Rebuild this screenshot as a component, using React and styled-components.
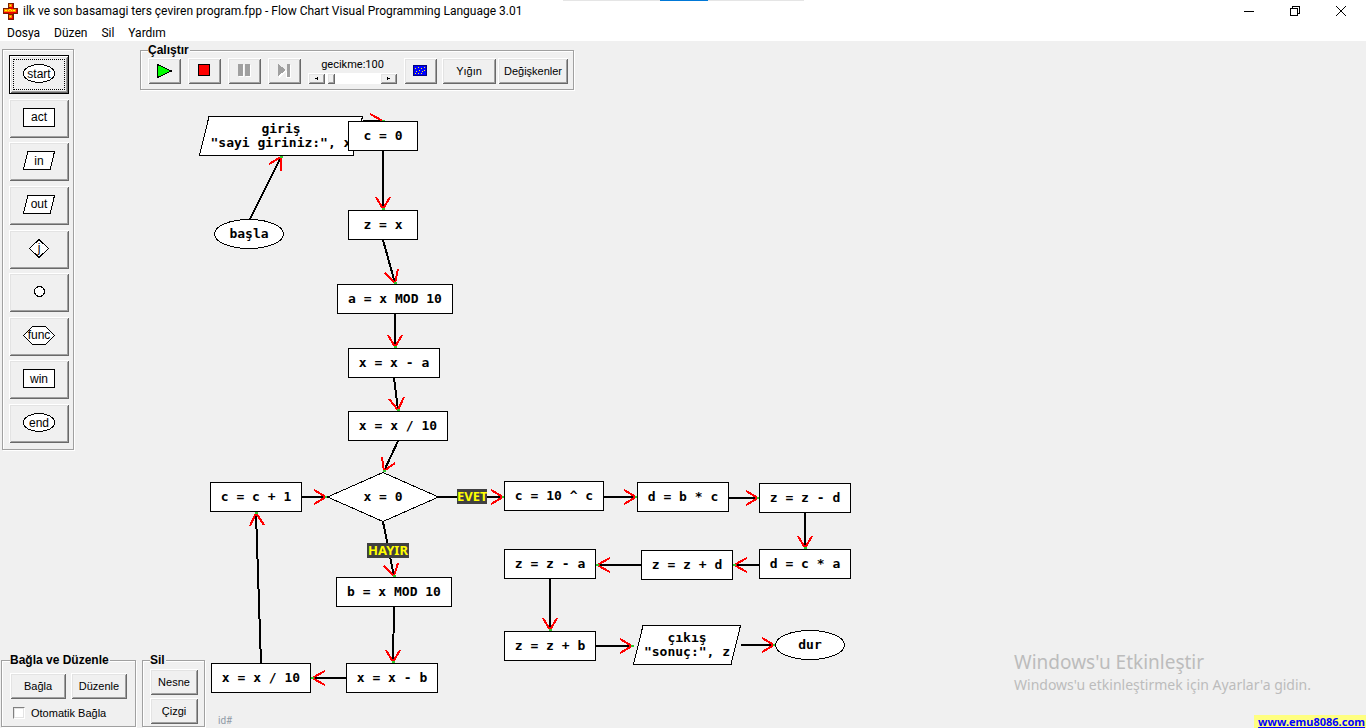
import React from "react";
import styled, { createGlobalStyle, css } from "styled-components";

const sans = '"Liberation Sans", Arial, sans-serif';
const ui = '"Noto Sans", "Open Sans", sans-serif';
const caption = 'Roboto, "Liberation Sans", sans-serif';
const mono = '"DejaVu Sans Mono", "Liberation Mono", monospace';

const GlobalStyle = createGlobalStyle`
  *, *::before, *::after { box-sizing: border-box; }
  body { margin: 0; background: #f0f0f0; color: #000; font-family: ${sans}; font-size: 11px; }
  button { font: inherit; color: inherit; }
`;

const raised = css`
  border: 0;
  background: #f0f0f0;
  box-shadow: inset 1px 1px 0 #fff, inset -1px -1px 0 #696969,
    inset 2px 2px 0 #e3e3e3, inset -2px -2px 0 #a0a0a0;
`;

const etched = css`
  border: 1px solid #a0a0a0;
  box-shadow: 1px 1px 0 #fff, inset 1px 1px 0 #fff;
`;

const Window = styled.div`
  display: flex;
  flex-direction: column;
  min-height: 100vh;
`;

const TitleBar = styled.header`
  position: relative;
  display: flex;
  align-items: center;
  height: 24px;
  padding: 0 2px 2px;
  gap: 5px;
  background: #fff;
`;

const Title = styled.h1`
  flex: 1;
  margin: 0;
  font: 400 12px/20px ${caption};
  white-space: nowrap;
`;

const DockStrip = styled.div`
  position: absolute;
  top: 0;
  left: 50%;
  display: flex;
  justify-content: center;
  width: 241px;
  height: 1px;
  margin-left: -120px;
  background: #e5e5e5;

  &::after {
    content: "";
    width: 48px;
    background: #0078d7;
  }
`;

const WindowControls = styled.div`
  display: flex;
`;

const WindowButton = styled.button`
  display: grid;
  place-items: center;
  width: 46px;
  height: 22px;
  padding: 0;
  border: 0;
  background: none;
`;

const MenuBar = styled.nav`
  display: flex;
  height: 17px;
  background: #fff;
`;

const MenuLink = styled.a`
  padding: 0 7px;
  color: #000;
  font: 12px/19px ${caption};
  text-decoration: none;
`;

const Workspace = styled.main`
  position: relative;
  display: flex;
  flex: 1;
  flex-direction: column;
  justify-content: space-between;
  padding-top: 2px;
`;

const Canvas = styled.div`
  position: absolute;
  inset: 0;
  overflow: hidden;
`;

const EdgeLayer = styled.svg`
  position: absolute;
  width: 100%;
  height: 100%;
`;

const NodeBox = styled.div`
  position: absolute;
  left: ${(p) => p.$x}px;
  top: ${(p) => p.$y}px;
  display: grid;
  place-items: center;
  width: ${(p) => p.$w}px;
  height: ${(p) => p.$h}px;

  > * { grid-area: 1 / 1; }
`;

const NodeText = styled.span`
  font: 700 13px/14px ${mono};
  text-align: center;
  white-space: pre;
`;

const BranchLabel = styled.span`
  position: absolute;
  left: ${(p) => p.$x}px;
  top: ${(p) => p.$y}px;
  width: ${(p) => p.$w}px;
  background: #404040;
  color: #ff0;
  font: 700 13px/15px ${ui};
  text-align: center;
`;

const TopRow = styled.div`
  position: relative;
  display: flex;
  align-items: flex-start;
  gap: 66px;
  padding-left: 2px;
  pointer-events: none;

  > * { pointer-events: auto; }
`;

const Palette = styled.section`
  ${etched}
  display: flex;
  flex-direction: column;
  justify-content: space-between;
  width: 72px;
  height: 401px;
  margin-top: 6px;
  padding: 5px 4px 6px 6px;
`;

const PaletteButton = styled.button`
  ${raised}
  display: grid;
  place-items: center;
  width: 60px;
  height: 39px;
  padding: 0 0 2px;

  ${(p) =>
    p.$active &&
    css`
      border: 1px solid #000;
      outline: 1px dotted #000;
      outline-offset: -5px;
    `}
`;

const Glyph = styled.span`
  display: grid;
  place-items: center;
  font-size: 12px;
  line-height: 16px;

  > * { grid-area: 1 / 1; }
`;

const Group = styled.fieldset`
  ${etched}
  min-width: 0;
  margin: 0;
  padding: ${(p) => p.$pad};
  background: #f0f0f0;
`;

const GroupTitle = styled.legend`
  height: 14px;
  padding: 0 1px 0 0;
  background: #f0f0f0;
  font-weight: 700;
  font-size: 12px;
  line-height: 14px;
`;

const Row = styled.div`
  display: flex;
  align-items: center;
  gap: ${(p) => p.$gap}px;
`;

const Stack = styled.div`
  display: flex;
  flex-direction: column;
  gap: ${(p) => p.$gap}px;
`;

const Button = styled.button`
  ${raised}
  display: grid;
  place-items: center;
  width: ${(p) => p.$w}px;
  height: 26px;
  padding: 0;
`;

const Delay = styled.div`
  display: flex;
  flex-direction: column;
  gap: 2px;
  width: 89px;
`;

const DelayLabel = styled.label`
  font: 11px/12px ${caption};
  text-align: center;
`;

const ScrollArrow = styled.button`
  ${raised}
  display: grid;
  flex: none;
  place-items: center;
  width: 17px;
  height: 11px;
  padding: 0;
`;

const DelayRange = styled.input`
  flex: 1;
  min-width: 0;
  height: 11px;
  margin: 0;
  appearance: none;
  background: #fff;

  &::-webkit-slider-thumb {
    ${raised}
    appearance: none;
    width: 8px;
    height: 11px;
  }
`;

const BottomRow = styled.footer`
  position: relative;
  display: flex;
  align-items: flex-end;
  padding-left: 1px;
  gap: 6px;
  pointer-events: none;

  > * { pointer-events: auto; }
`;

const BottomGroup = styled(Group)`
  height: 74px;
  width: ${(p) => p.$w}px;
  margin-bottom: 1px;
`;

const CheckLabel = styled.label`
  display: flex;
  align-items: center;
  gap: 6px;
  padding-left: 3px;
`;

const CheckBox = styled.input`
  appearance: none;
  width: 12px;
  height: 12px;
  margin: 0;
  border: 1px solid;
  border-color: #808080 #fff #fff #808080;
  background: #fff;
  box-shadow: inset 0 0 0 1px #e3e3e3;
`;

const IdText = styled.span`
  padding: 0 0 0 7px;
  color: #8f9aa6;
  font: 10px/15px ${caption};
`;

const Notice = styled.aside`
  display: flex;
  flex-direction: column;
  margin-left: auto;
`;

const Activation = styled.div`
  padding: 0 55px 19px 0;
  color: #bcbcbc;
  font: 14px/22px ${ui};
`;

const ActivationTitle = styled.p`
  margin: 0;
  font-size: 19px;
  line-height: 23px;
`;

const ActivationText = styled.p`
  margin: 0;
`;

const SiteLink = styled.a`
  align-self: flex-end;
  padding: 0 1px 0 4px;
  background: #ffff80;
  color: #00f;
  font: 700 11px/13px ${ui};
`;

function shapeOf(kind, w, h) {
  const r = w - 0.5;
  const b = h - 0.5;
  if (kind === "ellipse") return <ellipse cx={w / 2} cy={h / 2} rx={w / 2 - 0.5} ry={h / 2 - 0.5} />;
  if (kind === "rect") return <rect x="0.5" y="0.5" width={w - 1} height={h - 1} />;
  const s = h / 4;
  const points = {
    slant: `${s},0.5 ${r},0.5 ${w - s},${b} 0.5,${b}`,
    diamond: `${w / 2},0.5 ${r},${h / 2} ${w / 2},${b} 0.5,${h / 2}`,
    hex: `${s * 2},0.5 ${w - s * 2},0.5 ${r},${h / 2} ${w - s * 2},${b} ${s * 2},${b} 0.5,${h / 2}`,
  }[kind];
  return <polygon points={points} />;
}

function Shape({ kind, w, h }) {
  return (
    <svg width={w} height={h} fill="#fff" stroke="#000" shapeRendering="crispEdges" aria-hidden="true">
      {shapeOf(kind, w, h)}
    </svg>
  );
}

const tools = [
  { name: "start", kind: "ellipse", w: 32, h: 19, text: "start" },
  { name: "act", kind: "rect", w: 32, h: 19, text: "act" },
  { name: "in", kind: "slant", w: 32, h: 19, text: "in" },
  { name: "out", kind: "slant", w: 32, h: 19, text: "out" },
  { name: "join", kind: "diamond", w: 20, h: 19, text: "j" },
  { name: "circle", kind: "ellipse", w: 11, h: 11, text: "" },
  { name: "func", kind: "hex", w: 32, h: 19, text: "func" },
  { name: "win", kind: "rect", w: 32, h: 19, text: "win" },
  { name: "end", kind: "ellipse", w: 32, h: 19, text: "end" },
];

// Node positions are measured from the top left corner of the canvas.
const nodes = [
  { kind: "slant", x: 199, y: 75, w: 164, h: 40, text: 'giriş\n"sayi giriniz:", x' },
  { kind: "ellipse", x: 214, y: 178, w: 70, h: 30, text: "başla" },
  { kind: "rect", x: 348, y: 80, w: 70, h: 30, text: "c = 0" },
  { kind: "rect", x: 348, y: 169, w: 70, h: 30, text: "z = x" },
  { kind: "rect", x: 337, y: 243, w: 116, h: 30, text: "a = x MOD 10" },
  { kind: "rect", x: 348, y: 307, w: 92, h: 30, text: "x = x - a" },
  { kind: "rect", x: 348, y: 370, w: 100, h: 30, text: "x = x / 10" },
  { kind: "diamond", x: 327, y: 431, w: 112, h: 50, text: "x = 0" },
  { kind: "rect", x: 210, y: 441, w: 92, h: 30, text: "c = c + 1" },
  { kind: "rect", x: 336, y: 536, w: 116, h: 30, text: "b = x MOD 10" },
  { kind: "rect", x: 211, y: 622, w: 100, h: 30, text: "x = x / 10" },
  { kind: "rect", x: 346, y: 622, w: 92, h: 30, text: "x = x - b" },
  { kind: "rect", x: 504, y: 440, w: 100, h: 30, text: "c = 10 ^ c" },
  { kind: "rect", x: 637, y: 441, w: 92, h: 30, text: "d = b * c" },
  { kind: "rect", x: 759, y: 442, w: 92, h: 30, text: "z = z - d" },
  { kind: "rect", x: 759, y: 508, w: 92, h: 30, text: "d = c * a" },
  { kind: "rect", x: 641, y: 509, w: 92, h: 30, text: "z = z + d" },
  { kind: "rect", x: 504, y: 508, w: 92, h: 30, text: "z = z - a" },
  { kind: "rect", x: 504, y: 590, w: 92, h: 30, text: "z = z + b" },
  { kind: "slant", x: 633, y: 584, w: 108, h: 40, text: 'çıkış\n"sonuç:", z' },
  { kind: "ellipse", x: 775, y: 589, w: 70, h: 30, text: "dur" },
];

// Each edge: start, tip, and the far ends of the two arrow strokes.
const edges = [
  [[250, 178], [281, 116], [269, 123], [281, 130]],
  [[363, 80], [383, 80], [370, 73], [370, 87]],
  [[383, 110], [383, 168], [376, 156], [390, 156]],
  [[383, 199], [395, 242], [385, 232], [398, 228]],
  [[395, 273], [395, 306], [388, 294], [402, 294]],
  [[394, 337], [398, 369], [389, 358], [404, 356]],
  [[398, 400], [384, 430], [382, 416], [395, 422]],
  [[302, 456], [326, 456], [314, 449], [314, 463]],
  [[439, 456], [503, 456], [491, 449], [491, 463]],
  [[383, 481], [394, 535], [384, 525], [398, 522]],
  [[394, 566], [393, 621], [386, 609], [400, 609]],
  [[346, 637], [312, 637], [325, 630], [325, 644]],
  [[261, 622], [256, 472], [250, 485], [264, 484]],
  [[604, 456], [636, 456], [624, 449], [624, 463]],
  [[729, 457], [758, 457], [746, 450], [746, 464]],
  [[805, 472], [805, 507], [798, 495], [812, 495]],
  [[759, 524], [734, 524], [747, 517], [747, 531]],
  [[641, 524], [597, 524], [610, 517], [610, 531]],
  [[550, 538], [550, 589], [543, 577], [557, 577]],
  [[596, 605], [632, 605], [620, 598], [620, 612]],
  [[741, 604], [774, 604], [762, 597], [762, 611]],
];

function Edge({ points: [from, tip, a, b] }) {
  return (
    <g fill="none" strokeWidth="2">
      <path d={`M${from} L${tip}`} stroke="#000" />
      <path d={`M${a} L${tip} L${b}`} stroke="#f00" />
      <rect x={tip[0] - 1} y={tip[1] - 1} width="3" height="2" fill="#2fc82f" />
    </g>
  );
}

function AppIcon() {
  return (
    <svg width="16" height="18" viewBox="0 0 16 18" shapeRendering="crispEdges" aria-hidden="true">
      <path d="M6 1h5v5h4v5h-4v1H9v1h2v4H6v-4h2v-1H6v-1H1V6h5V5h1V4H6z" fill="#e00" stroke="#7a1f00" />
      <path d="M7 2h3v3H7zM2 7h12v3H2zM7 13h3v3H7z" fill="#f80" />
      <path d="M8 3h1v1H8zM3 8h2v1H3zM6 8h1v1H6zM9 8h1v1H9zM11 8h2v1h-2zM8 14h1v1H8zM7 7h2v1H7z" fill="#ff0" />
    </svg>
  );
}

const icon = { width: 21, height: 18, shapeRendering: "crispEdges", "aria-hidden": true };

const PlayIcon = () => (
  <svg {...icon}><path d="M3.5 2.5v13L17.5 9z" fill="#0f0" stroke="#000" /></svg>
);
const StopIcon = () => (
  <svg {...icon}><rect x="4.5" y="2.5" width="11" height="11" fill="#f00" stroke="#000" /></svg>
);
const PauseIcon = () => (
  <svg {...icon}>
    <path d="M5 3h5v12H5zM12 3h5v12h-5z" fill="#fff" />
    <path d="M4 2h5v12H4zM11 2h5v12h-5z" fill="#a0a0a0" />
  </svg>
);
const StepIcon = () => (
  <svg {...icon}>
    <path d="M5 3v13l7-6v6h5V3h-4v6z" fill="#fff" />
    <path d="M4 2v12l8-6zM13 2h3v13h-3z" fill="#a0a0a0" />
  </svg>
);
const ScreenIcon = () => (
  <svg {...icon}>
    <rect x="3.5" y="3.5" width="13" height="10" fill="#00f" stroke="#000080" />
    <path d="M5 6h1v1H5zM8 5h1v1H8zM11 6h1v1h-1zM14 5h1v1h-1zM6 9h1v1H6zM9 8h1v1H9zM12 9h1v1h-1zM14 8h1v1h-1zM5 11h1v1H5zM8 11h1v1H8zM11 11h1v1h-1z" fill="#ff0" />
  </svg>
);

function DiagramNode({ kind, x, y, w, h, text }) {
  return (
    <NodeBox $x={x} $y={y} $w={w} $h={h}>
      <Shape kind={kind} w={w} h={h} />
      <NodeText>{text}</NodeText>
    </NodeBox>
  );
}

function Diagram() {
  return (
    <Canvas>
      {nodes.slice(0, 1).map((n) => <DiagramNode key={n.text} {...n} />)}
      <EdgeLayer shapeRendering="crispEdges" aria-hidden="true">
        {edges.map((points) => <Edge key={points.join()} points={points} />)}
      </EdgeLayer>
      {nodes.slice(1).map((n) => <DiagramNode key={`${n.x},${n.y}`} {...n} />)}
      <BranchLabel $x={457} $y={448} $w={30}>EVET</BranchLabel>
      <BranchLabel $x={367} $y={502} $w={42}>HAYIR</BranchLabel>
    </Canvas>
  );
}

export default function App() {
  return (
    <Window>
      <GlobalStyle />
      <TitleBar>
        <AppIcon />
        <Title>ilk ve son basamagi ters çeviren program.fpp - Flow Chart Visual Programming Language 3.01</Title>
        <DockStrip />
        <WindowControls>
          <WindowButton aria-label="Minimize">
            <svg width="10" height="10" shapeRendering="crispEdges"><path d="M0 5.5h10" stroke="#000" /></svg>
          </WindowButton>
          <WindowButton aria-label="Restore">
            <svg width="10" height="10" fill="none" stroke="#000" shapeRendering="crispEdges">
              <path d="M.5 2.5h7v7h-7zM2.5 2V.5h7v7H8" />
            </svg>
          </WindowButton>
          <WindowButton aria-label="Close">
            <svg width="10" height="10"><path d="M0 0l10 10M10 0L0 10" stroke="#000" /></svg>
          </WindowButton>
        </WindowControls>
      </TitleBar>
      <MenuBar>
        {["Dosya", "Düzen", "Sil", "Yardım"].map((m) => <MenuLink key={m} href="#">{m}</MenuLink>)}
      </MenuBar>
      <Workspace>
        <Diagram />
        <TopRow>
          <Palette>
            {tools.map((t, i) => (
              <PaletteButton key={t.name} $active={i === 0} aria-label={t.name}>
                <Glyph>
                  <Shape kind={t.kind} w={t.w} h={t.h} />
                  <span>{t.text}</span>
                </Glyph>
              </PaletteButton>
            ))}
          </Palette>
          <Group $pad="1px 5px 5px 7px">
            <GroupTitle>Çalıştır</GroupTitle>
            <Row $gap={5}>
              <Row $gap={7}>
                <Button $w={33} aria-label="Play"><PlayIcon /></Button>
                <Button $w={33} aria-label="Stop"><StopIcon /></Button>
                <Button $w={33} aria-label="Pause"><PauseIcon /></Button>
                <Button $w={33} aria-label="Step"><StepIcon /></Button>
                <Delay>
                  <DelayLabel htmlFor="delay">gecikme:100</DelayLabel>
                  <Row $gap={0}>
                    <ScrollArrow aria-label="Decrease">
                      <svg width="3" height="3" shapeRendering="crispEdges"><path d="M3 0v3L0 1.5z" /></svg>
                    </ScrollArrow>
                    <DelayRange id="delay" type="range" min="0" max="2000" defaultValue="100" />
                    <ScrollArrow aria-label="Increase">
                      <svg width="3" height="3" shapeRendering="crispEdges"><path d="M0 0v3l3-1.5z" /></svg>
                    </ScrollArrow>
                  </Row>
                </Delay>
                <Button $w={33} aria-label="Screen"><ScreenIcon /></Button>
              </Row>
              <Row $gap={2}>
                <Button $w={54}>Yığın</Button>
                <Button $w={70}>Değişkenler</Button>
              </Row>
            </Row>
          </Group>
        </TopRow>
        <BottomRow>
          <BottomGroup $w={135} $pad="6px 8px 0">
            <GroupTitle>Bağla ve Düzenle</GroupTitle>
            <Stack $gap={8}>
              <Row $gap={5}>
                <Button $w={56}>Bağla</Button>
                <Button $w={56}>Düzenle</Button>
              </Row>
              <CheckLabel>
                <CheckBox type="checkbox" />
                Otomatik Bağla
              </CheckLabel>
            </Stack>
          </BottomGroup>
          <BottomGroup $w={63} $pad="2px 7px 0">
            <GroupTitle>Sil</GroupTitle>
            <Stack $gap={3}>
              <Button $w={48}>Nesne</Button>
              <Button $w={48}>Çizgi</Button>
            </Stack>
          </BottomGroup>
          <IdText>id#</IdText>
          <Notice>
            <Activation>
              <ActivationTitle>Windows'u Etkinleştir</ActivationTitle>
              <ActivationText>Windows'u etkinleştirmek için Ayarlar'a gidin.</ActivationText>
            </Activation>
            <SiteLink href="#">www.emu8086.com</SiteLink>
          </Notice>
        </BottomRow>
      </Workspace>
    </Window>
  );
}
